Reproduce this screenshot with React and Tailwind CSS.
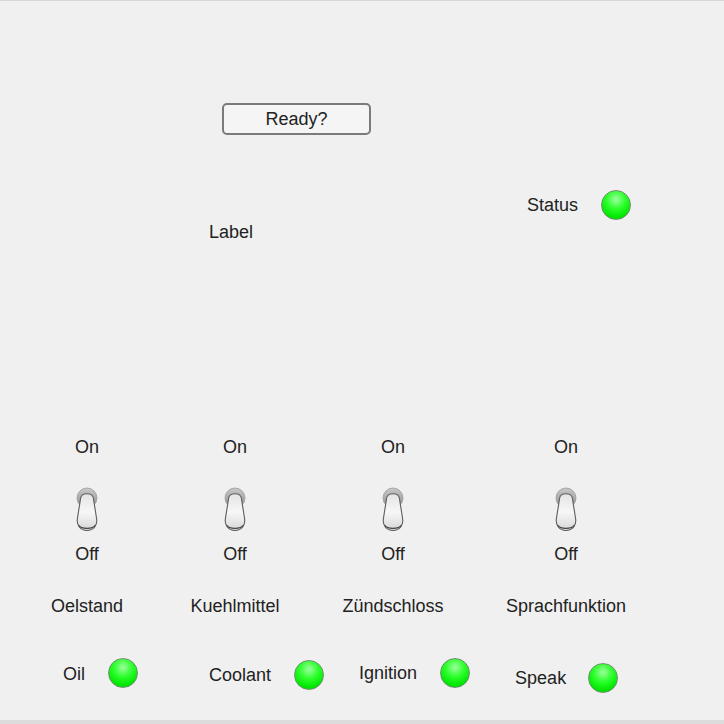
import React from 'react';

// Grüne Statuslampe
const Lamp = () => (
  <div className="w-[30px] h-[30px] shrink-0 rounded-full border border-[#6f8f6f] bg-[radial-gradient(circle_at_50%_30%,#9dff9d_0%,#2bff2b_40%,#00e600_75%,#00c800_100%)]" />
);

// Kippschalter in Stellung "Off"
const ToggleSwitch = () => (
  <svg width="24" height="45" viewBox="0 0 24 45">
    <defs>
      <linearGradient id="ring" x1="0" y1="0" x2="0" y2="1">
        <stop offset="0" stopColor="#c8c8c8" />
        <stop offset="1" stopColor="#8e8e8e" />
      </linearGradient>
      <linearGradient id="lever" x1="0" y1="0" x2="0" y2="1">
        <stop offset="0" stopColor="#e4e4e4" />
        <stop offset="0.5" stopColor="#f7f7f7" />
        <stop offset="1" stopColor="#d6d6d6" />
      </linearGradient>
    </defs>
    <circle cx="12" cy="11" r="10" fill="url(#ring)" stroke="#9a9a9a" strokeWidth="0.8" />
    <path
      d="M5.5 12 C5.5 5 18.5 5 18.5 12 L21.5 31 C23 39 18 43.5 12 43.5 C6 43.5 1 39 2.5 31 Z"
      fill="url(#lever)"
      stroke="#5c5c5c"
      strokeWidth="1.1"
    />
    <path d="M3.5 38 C6 42.5 18 42.5 20.5 38" fill="none" stroke="#444" strokeWidth="1.2" />
  </svg>
);

const switches = [
  { name: 'Oelstand', ml: 'ml-[27px]' },
  { name: 'Kuehlmittel', ml: 'ml-[28px]' },
  { name: 'Zündschloss', ml: 'ml-[38px]' },
  { name: 'Sprachfunktion', ml: 'ml-[53px]' },
];

const lamps = [
  { label: 'Oil', cls: 'ml-[63px] mt-[41px] gap-[23px]', pt: 'pt-[3px]' },
  { label: 'Coolant', cls: 'ml-[71px] mt-[43px] gap-[23px]', pt: 'pt-[0px]' },
  { label: 'Ignition', cls: 'ml-[35px] mt-[41px] gap-[23px]', pt: 'pt-[0px]' },
  { label: 'Speak', cls: 'ml-[45px] mt-[46px] gap-[22px]', pt: 'pt-[0px]' },
];

const App = () => {
  return (
    <div className="w-[724px] h-[724px] overflow-hidden flex flex-col bg-[#f0f0f0] border-t border-b-4 border-t-[#d6d6d6] border-b-[#dcdcdc] font-['Liberation_Sans',Arial,sans-serif] text-[18px] leading-[21px] text-[#222]">
      {/* Button */}
      <button className="ml-[222px] mt-[102px] w-[149px] h-[32px] flex items-center justify-center rounded-[5px] border-2 border-[#7b7b7b] bg-[#f5f5f5] text-[#222]">
        Ready?
      </button>

      {/* Status */}
      <div className="ml-[527px] mt-[55px] h-[30px] flex items-center gap-[23px]">
        <span>Status</span>
        <Lamp />
      </div>

      {/* Label */}
      <div className="ml-[209px] mt-[2px]">Label</div>

      {/* Schalter */}
      <div className="mt-[194px] flex">
        {switches.map((s) => (
          <div key={s.name} className={`${s.ml} w-[120px] flex flex-col items-center`}>
            <span>On</span>
            <div className="mt-[29px] h-[45px]">
              <ToggleSwitch />
            </div>
            <span className="mt-[12px]">Off</span>
            <span className="mt-[31px] whitespace-nowrap">{s.name}</span>
          </div>
        ))}
      </div>

      {/* Lampen */}
      <div className="flex items-start">
        {lamps.map((l) => (
          <div key={l.label} className={`${l.cls} h-[30px] flex items-center`}>
            <span className={l.pt}>{l.label}</span>
            <Lamp />
          </div>
        ))}
      </div>
    </div>
  );
};

export default App;
